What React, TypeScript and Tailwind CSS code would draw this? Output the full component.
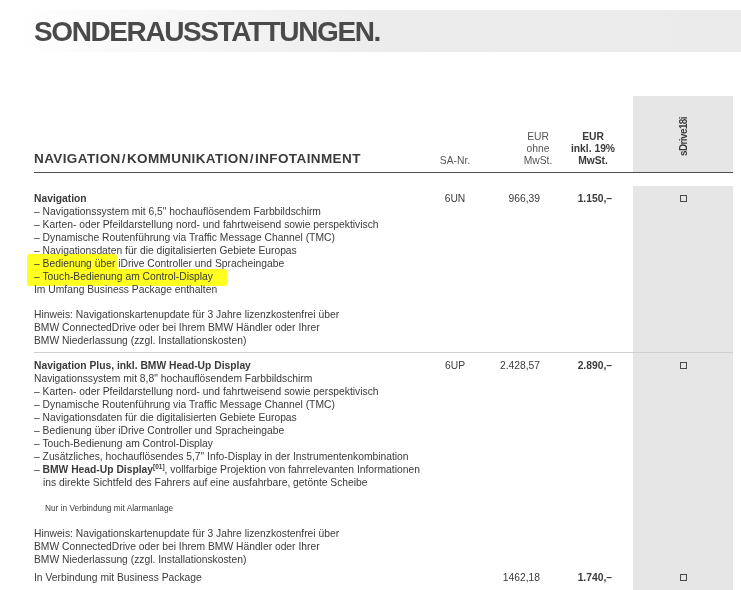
import React from "react";

const cols = "grid w-[699px] grid-cols-[396px_50px_80px_73px_100px]";

function Check() {
  return (
    <div className="flex justify-center pt-[3px]">
      <div className="w-[7px] h-[7px] border border-[#4a4a4a]" />
    </div>
  );
}

function L({ children, className = "" }: { children: React.ReactNode; className?: string }) {
  return <div className={"whitespace-nowrap " + className}>{children}</div>;
}

function D({ children }: { children: React.ReactNode }) {
  return <L>– {children}</L>;
}

export default function App() {
  return (
    <div className="w-[741px] h-[590px] overflow-hidden bg-white font-['Liberation_Sans',Arial,sans-serif] text-[10.3px] leading-[13px] text-[#3a3a3a]">
      {/* Title band */}
      <div className="pt-[10px] pl-[17px]">
        <div className="h-[42px] bg-[linear-gradient(to_right,#ffffff_0%,#ececec_50%,#ebebeb_100%)] pl-[17px] pt-[8px]">
          <div className="text-[28px] leading-[28px] font-bold tracking-[-1.4px] text-[#4a4a4a]">
            SONDERAUSSTATTUNGEN.
          </div>
        </div>
      </div>

      <div className="pl-[34px]">
        {/* Header row */}
        <div className={cols + " mt-[44px] h-[76px] items-end"}>
          <div className="pb-[5px] text-[13.5px] leading-[16px] font-bold tracking-[0.4px] text-[#3a3a3a] whitespace-nowrap">
            NAVIGATION<span className="mx-[1px]">/</span>KOMMUNIKATION<span className="mx-[1px]">/</span>INFOTAINMENT
          </div>
          <div className="pb-[5px] text-center leading-[12px] text-[#555]">SA-Nr.</div>
          <div className="pb-[5px] pl-[36px] text-center leading-[12px] text-[#555]">
            EUR
            <br />
            ohne
            <br />
            MwSt.
          </div>
          <div className="pb-[5px] pr-[7px] text-center leading-[12px] font-bold text-[#3a3a3a]">
            EUR
            <br />
            inkl. 19%
            <br />
            MwSt.
          </div>
          <div className="self-stretch bg-[#e6e6e6] flex items-start justify-center pt-[21px]">
            <span className="[writing-mode:vertical-rl] rotate-180 font-bold text-[10px] leading-[11px] tracking-[-0.6px] text-[#3a3a3a]">
              sDrive18i
            </span>
          </div>
        </div>
        <div className="w-[699px] h-px bg-[#4d4d4d]" />

        {/* Row 1 */}
        <div className={cols + " mt-[13px]"}>
          <div className="relative pt-[6px] pb-[5px]">
            <div className="absolute left-[-7px] top-[68px] w-[90px] h-[17px] bg-[#ffff22] mix-blend-multiply rounded-[2px]" />
            <div className="absolute left-[-7px] top-[83px] w-[200px] h-[17px] bg-[#ffff22] mix-blend-multiply rounded-[2px]" />
            <div className="relative">
              <L className="font-bold">Navigation</L>
              <D>Navigationssystem mit 6,5" hochauflösendem Farbbildschirm</D>
              <D>Karten- oder Pfeildarstellung nord- und fahrtweisend sowie perspektivisch</D>
              <D>Dynamische Routenführung via Traffic Message Channel (TMC)</D>
              <D>Navigationsdaten für die digitalisierten Gebiete Europas</D>
              <D>Bedienung über iDrive Controller und Spracheingabe</D>
              <D>Touch-Bedienung am Control-Display</D>
              <L>Im Umfang Business Package enthalten</L>
              <L className="mt-[12px]">Hinweis: Navigationskartenupdate für 3 Jahre lizenzkostenfrei über</L>
              <L>BMW ConnectedDrive oder bei Ihrem BMW Händler oder Ihrer</L>
              <L>BMW Niederlassung (zzgl. Installationskosten)</L>
            </div>
          </div>
          <div className="pt-[6px] text-center">6UN</div>
          <div className="pt-[6px] text-right pr-[20px]">966,39</div>
          <div className="pt-[6px] text-right pr-[21px] font-bold">1.150,–</div>
          <div className="pt-[6px] bg-[#e6e6e6]">
            <Check />
          </div>
        </div>

        {/* Row 2 */}
        <div className={cols + " border-t border-[#cfcfcf]"}>
          <div className="pt-[6px]">
            <L className="font-bold">Navigation Plus, inkl. BMW Head-Up Display</L>
            <L>Navigationssystem mit 8,8" hochauflösendem Farbbildschirm</L>
            <D>Karten- oder Pfeildarstellung nord- und fahrtweisend sowie perspektivisch</D>
            <D>Dynamische Routenführung via Traffic Message Channel (TMC)</D>
            <D>Navigationsdaten für die digitalisierten Gebiete Europas</D>
            <D>Bedienung über iDrive Controller und Spracheingabe</D>
            <D>Touch-Bedienung am Control-Display</D>
            <D>Zusätzliches, hochauflösendes 5,7" Info-Display in der Instrumentenkombination</D>
            <L>
              – <span className="font-bold">BMW Head-Up Display</span>
              <sup className="font-bold text-[6.5px] top-[-4px]">[01]</sup>, vollfarbige Projektion von fahrrelevanten Informationen
            </L>
            <L className="pl-[9px]">ins direkte Sichtfeld des Fahrers auf eine ausfahrbare, getönte Scheibe</L>
            <L className="mt-[13.5px] pl-[11px] text-[8.3px] leading-[11px]">Nur in Verbindung mit Alarmanlage</L>
            <L className="mt-[13.5px]">Hinweis: Navigationskartenupdate für 3 Jahre lizenzkostenfrei über</L>
            <L>BMW ConnectedDrive oder bei Ihrem BMW Händler oder Ihrer</L>
            <L>BMW Niederlassung (zzgl. Installationskosten)</L>
          </div>
          <div className="pt-[6px] text-center">6UP</div>
          <div className="pt-[6px] text-right pr-[20px]">2.428,57</div>
          <div className="pt-[6px] text-right pr-[21px] font-bold">2.890,–</div>
          <div className="pt-[6px] bg-[#e6e6e6]">
            <Check />
          </div>
        </div>

        {/* Sub row */}
        <div className={cols}>
          <div className="pt-[4.5px] pb-[20px]">
            <L>In Verbindung mit Business Package</L>
          </div>
          <div className="pt-[4.5px]" />
          <div className="pt-[4.5px] text-right pr-[20px]">1462,18</div>
          <div className="pt-[4.5px] text-right pr-[21px] font-bold">1.740,–</div>
          <div className="pt-[4.5px] bg-[#e6e6e6]">
            <Check />
          </div>
        </div>
      </div>
    </div>
  );
}
